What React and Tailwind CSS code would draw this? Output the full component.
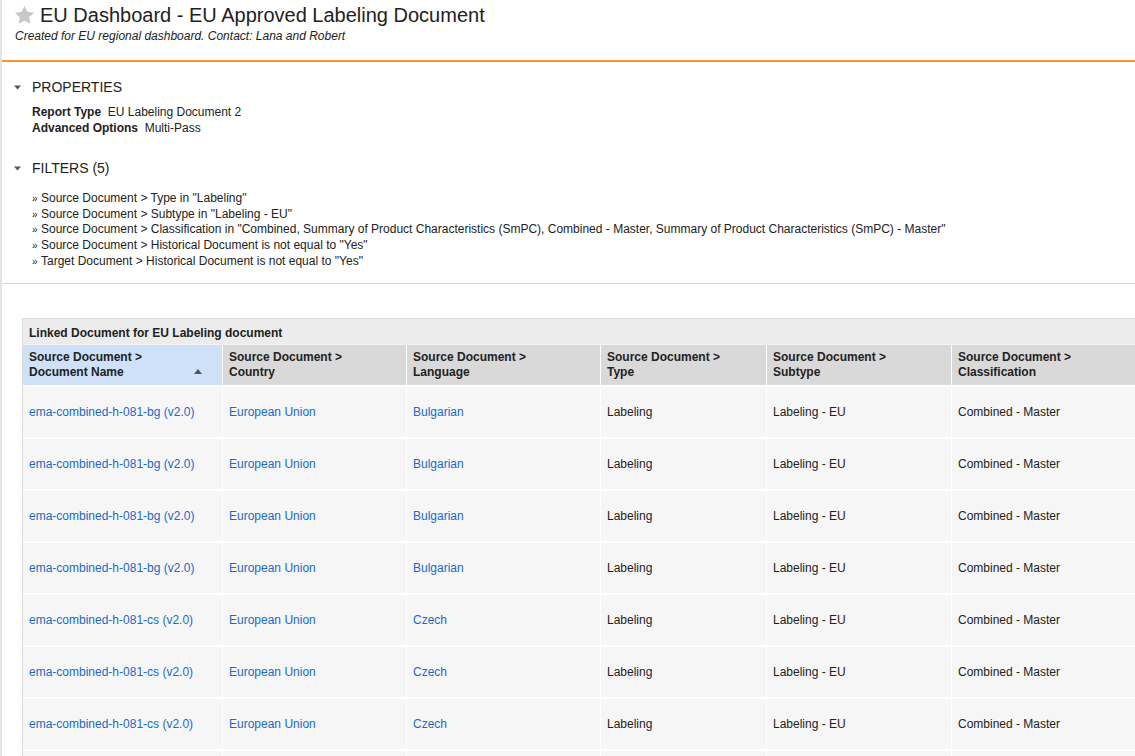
import React from 'react';

const columns = [
  { label: 'Document Name', w: 'w-[200px]', sorted: true },
  { label: 'Country', w: 'w-[184px]' },
  { label: 'Language', w: 'w-[194px]' },
  { label: 'Type', w: 'w-[166px]' },
  { label: 'Subtype', w: 'w-[185px]' },
  { label: 'Classification', w: 'w-[260px]' },
];

const rows = [
  ['ema-combined-h-081-bg (v2.0)', 'European Union', 'Bulgarian'],
  ['ema-combined-h-081-bg (v2.0)', 'European Union', 'Bulgarian'],
  ['ema-combined-h-081-bg (v2.0)', 'European Union', 'Bulgarian'],
  ['ema-combined-h-081-bg (v2.0)', 'European Union', 'Bulgarian'],
  ['ema-combined-h-081-cs (v2.0)', 'European Union', 'Czech'],
  ['ema-combined-h-081-cs (v2.0)', 'European Union', 'Czech'],
  ['ema-combined-h-081-cs (v2.0)', 'European Union', 'Czech'],
];

const filters = [
  'Source Document > Type in "Labeling"',
  'Source Document > Subtype in "Labeling - EU"',
  'Source Document > Classification in "Combined, Summary of Product Characteristics (SmPC), Combined - Master, Summary of Product Characteristics (SmPC) - Master"',
  'Source Document > Historical Document is not equal to "Yes"',
  'Target Document > Historical Document is not equal to "Yes"',
];

const Caret = () => (
  <svg width="7" height="5" viewBox="0 0 7 5" className="ml-[12px] mr-[11px]">
    <path d="M0 0.5h7L3.5 4.5z" fill="#555" />
  </svg>
);

const Section = ({ title }) => (
  <div className="flex items-center h-[20px] text-[14px] text-[#222]">
    <Caret />
    <span>{title}</span>
  </div>
);

export default function App() {
  return (
    <div className="min-h-[756px] w-full overflow-hidden border-l-2 border-[#e4e4e4] bg-white text-[#222] font-['Liberation_Sans',Arial,sans-serif]">
      <div className="h-[62px] border-b-2 border-[#f39530] pl-[12px] pt-[3px]">
        <div className="flex items-center h-[24px]">
          <svg width="21" height="20" viewBox="0 0 24 23" className="mr-[5px]">
            <path d="M12 0.8l3.4 7 7.6 1-5.6 5.3 1.4 7.6L12 18l-6.8 3.7 1.4-7.6L1 9l7.6-1z" fill="#c8c8c8" />
          </svg>
          <h1 className="text-[20px] leading-[24px] text-[#222]">EU Dashboard - EU Approved Labeling Document</h1>
        </div>
        <p className="text-[12px] italic leading-[16px] pl-[1px] mt-[1px]">Created for EU regional dashboard. Contact: Lana and Robert</p>
      </div>

      <div className="pt-[15px] pb-[13px] border-b border-[#d4d4d4]">
        <Section title="PROPERTIES" />
        <div className="pl-[30px] pt-[7px] text-[12px] leading-[16px]">
          <div><span className="font-bold">Report Type</span>&nbsp; EU Labeling Document 2</div>
          <div><span className="font-bold">Advanced Options</span>&nbsp; Multi-Pass</div>
        </div>
        <div className="mt-[22px]">
          <Section title="FILTERS (5)" />
        </div>
        <ul className="pl-[30px] pt-[13px] text-[12px] leading-[15.7px]">
          {filters.map((f) => (
            <li key={f} className="flex items-baseline whitespace-nowrap">
              <span className="text-[10px] w-[9px]">»</span>
              <span>{f}</span>
            </li>
          ))}
        </ul>
      </div>

      <div className="pt-[34px] pl-[20px]">
        <div className="border border-r-0 border-[#dcdcdc] w-[1300px] text-[12px]">
          <div className="h-[26px] bg-[#ececec] border-b border-[#f4f4f4] pl-[6px] pt-[7px] leading-[15px] font-bold">
            Linked Document for EU Labeling document
          </div>
          <div className="flex h-[40px]">
            {columns.map((c) => (
              <div
                key={c.label}
                className={`${c.w} relative shrink-0 border-r border-white pl-[6px] pt-[5px] leading-[15px] font-bold ${c.sorted ? 'bg-[#cfe1f8]' : 'bg-[#d9d9d9]'}`}
              >
                <div>Source Document &gt;</div>
                <div>{c.label}</div>
                {c.sorted && (
                  <svg width="8" height="5" viewBox="0 0 8 5" className="absolute right-[20px] top-[24px]">
                    <path d="M0 5h8L4 0z" fill="#555" />
                  </svg>
                )}
              </div>
            ))}
          </div>
          {rows.map((r, i) => {
            const cells = [...r, 'Labeling', 'Labeling - EU', 'Combined - Master'];
            return (
              <div key={i} className="flex h-[52px] border-t-2 border-white">
                {cells.map((v, j) => (
                  <div
                    key={j}
                    className={`${columns[j].w} shrink-0 flex items-center bg-[#f6f6f6] border-r border-white pl-[6px] ${j < 3 ? 'text-[#1a6ac6]' : 'text-[#222]'}`}
                  >
                    {v}
                  </div>
                ))}
              </div>
            );
          })}
          <div className="flex h-[52px] border-t-2 border-white">
            {columns.map((c) => (
              <div key={c.label} className={`${c.w} shrink-0 bg-[#f6f6f6] border-r border-white`} />
            ))}
          </div>
        </div>
      </div>
    </div>
  );
}
